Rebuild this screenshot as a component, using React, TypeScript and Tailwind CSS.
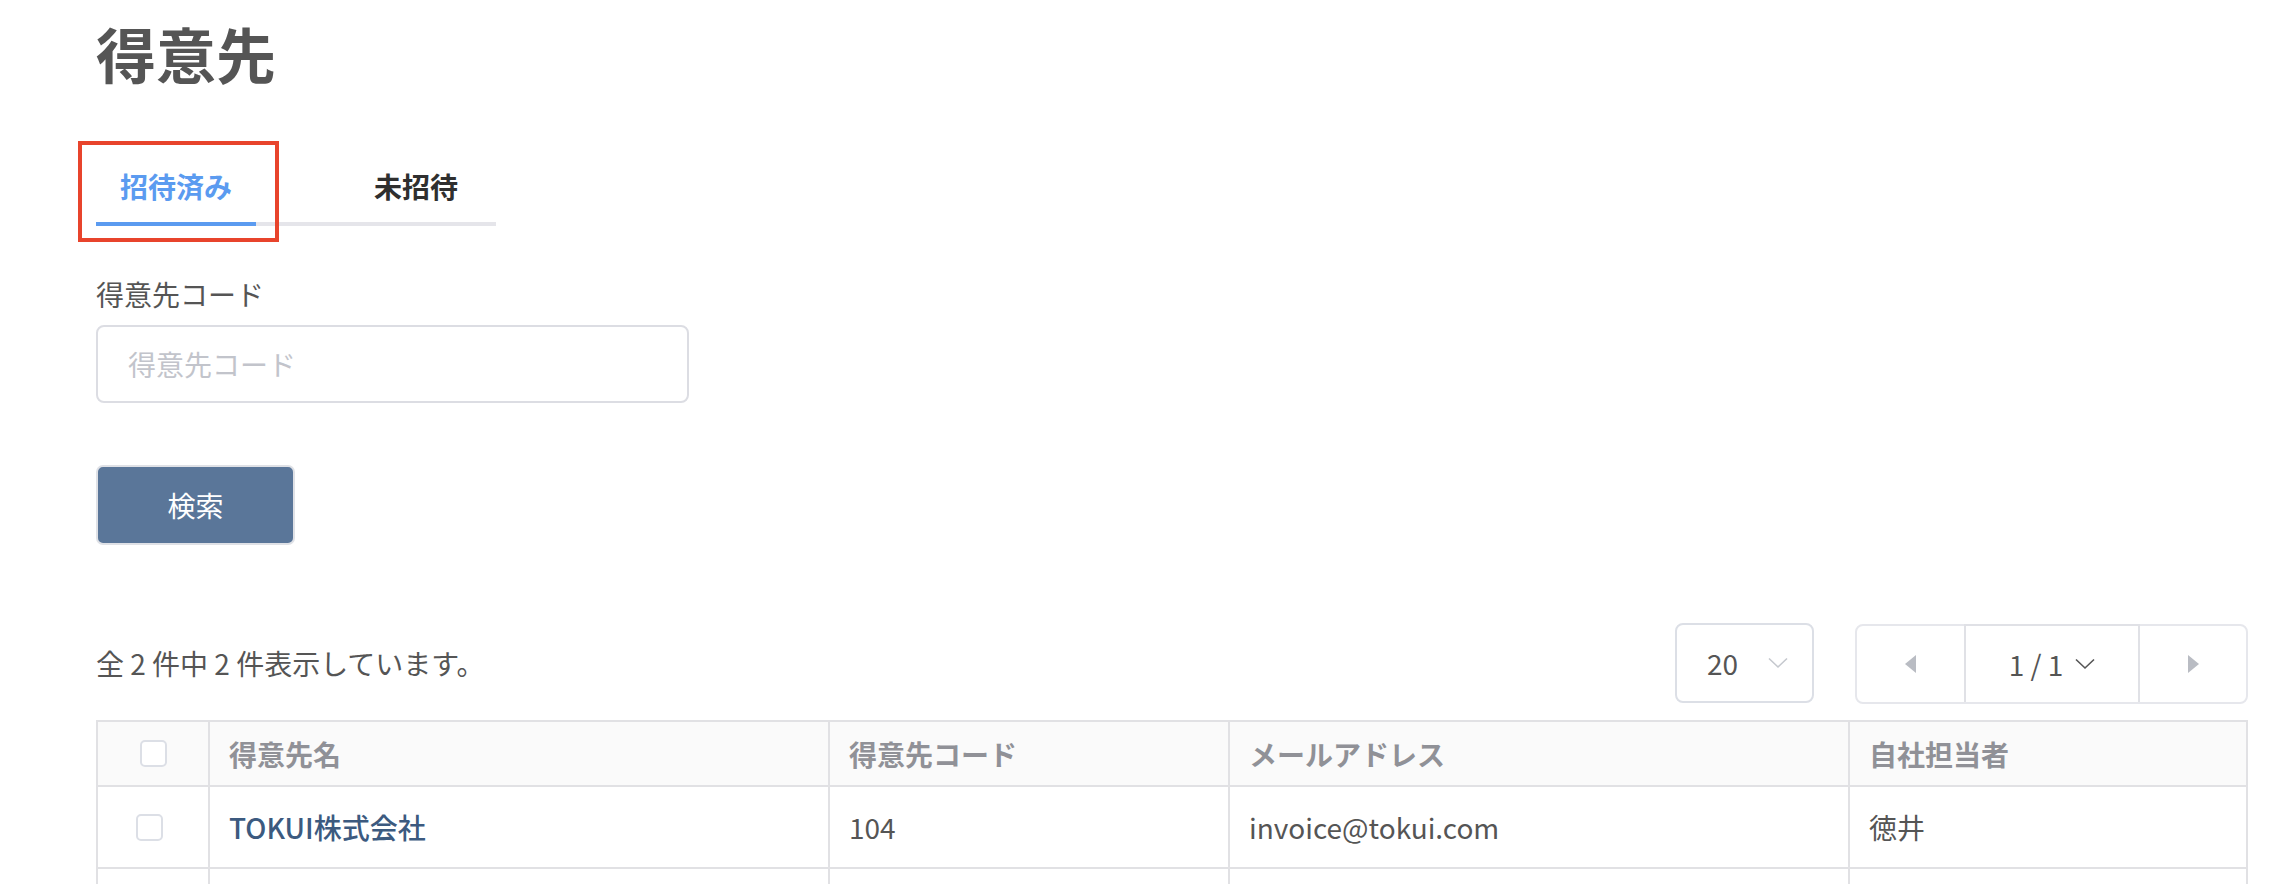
const font = { fontFamily: '"Noto Sans CJK JP", "Noto Sans", sans-serif' };

function Chevron({ className }: { className: string }) {
  return (
    <svg width="20" height="12" viewBox="0 0 20 12" className={className}>
      <polyline points="1,1.5 10,10 19,1.5" fill="none" stroke="currentColor" strokeWidth="1.6" />
    </svg>
  );
}

function Triangle({ dir }: { dir: "left" | "right" }) {
  return (
    <svg width="11" height="18" viewBox="0 0 11 18" className="text-[#b9bcc3]">
      {dir === "left" ? (
        <polygon points="11,0 11,18 0,9" fill="currentColor" />
      ) : (
        <polygon points="0,0 0,18 11,9" fill="currentColor" />
      )}
    </svg>
  );
}

const cell = "border-r-2 border-b-2 border-[#e1e1e4] flex items-center";

export default function App() {
  const rows = [{ name: "TOKUI株式会社", code: "104", mail: "invoice@tokui.com", owner: "徳井" }];

  return (
    <div className="min-h-screen bg-white pl-[96px] pr-[28px] pt-[23px] text-[28px]" style={font}>
      <h1 className="text-[60px] font-bold leading-none text-[#555555]">得意先</h1>

      {/* tabs */}
      <div className="mt-[83px] flex w-[400px] justify-between border-b-4 border-[#e5e5ea]">
        <div className="relative -mb-[4px] w-[160px] border-b-4 border-[#5b9bf0] pb-[16px] text-center font-bold leading-[40px] text-[#5b9bf0]">
          招待済み
          <div className="absolute -left-[18px] -right-[23px] -top-[25px] -bottom-[20px] border-4 border-[#e8442c]" />
        </div>
        <div className="w-[160px] pb-[16px] text-center font-bold leading-[40px] text-[#2f2f2f]">未招待</div>
      </div>

      {/* search form */}
      <div className="mt-[48px] leading-[40px] text-[#555555]">得意先コード</div>
      <input
        placeholder="得意先コード"
        className="mt-[11px] block h-[78px] w-[593px] rounded-[8px] border-2 border-[#dcdde3] px-[30px] text-[28px] text-[#555555] outline-none placeholder:text-[#c2c4cb]"
        style={font}
      />
      <button
        className="mt-[62px] flex h-[80px] w-[199px] items-center justify-center rounded-[7px] border-2 border-[#dfe1e6] bg-[#5a7699] text-[28px] text-white"
        style={font}
      >
        検索
      </button>

      {/* result toolbar */}
      <div className="mt-[77px] flex items-center justify-between">
        <div className="leading-[40px] text-[#555555]">全 2 件中 2 件表示しています。</div>
        <div className="flex items-center gap-[41px]">
          <div className="flex h-[80px] w-[139px] items-center justify-between rounded-[8px] border-2 border-[#dcdfe6] pl-[30px] pr-[24px]">
            <span className="text-[#555555]">20</span>
            <Chevron className="text-[#c5c8ce]" />
          </div>
          <div className="mt-[2px] flex h-[80px] w-[393px] items-stretch rounded-[8px] border-2 border-[#e6e7ec]">
            <div className="flex w-[107px] items-center justify-center">
              <Triangle dir="left" />
            </div>
            <div className="-mt-[2px] flex w-[176px] items-center justify-center gap-[12px] border-x-2 border-t-2 border-[#e0e1e6] text-[#555555]">
              <span>1 / 1</span>
              <Chevron className="text-[#555555]" />
            </div>
            <div className="flex flex-1 items-center justify-center">
              <Triangle dir="right" />
            </div>
          </div>
        </div>
      </div>

      {/* table */}
      <div className="mt-[16px] grid grid-cols-[112px_620px_400px_620px_398px] border-l-2 border-t-2 border-[#e1e1e4]">
        <div className={`${cell} h-[65px] justify-center bg-[#fafafa]`}>
          <span className="h-[27px] w-[27px] rounded-[5px] border-2 border-[#dcdfe6] bg-white" />
        </div>
        {["得意先名", "得意先コード", "メールアドレス", "自社担当者"].map((h) => (
          <div key={h} className={`${cell} h-[65px] bg-[#fafafa] pl-[19px] font-bold text-[#909197]`}>
            {h}
          </div>
        ))}
        {rows.map((r) => (
          <div key={r.code} className="contents">
            <div className={`${cell} h-[82px] justify-center`}>
              <span className="mr-[8px] h-[27px] w-[27px] rounded-[5px] border-2 border-[#dcdfe6] bg-white" />
            </div>
            <div className={`${cell} h-[82px] pl-[19px] font-medium text-[#3c5a7f]`}>{r.name}</div>
            <div className={`${cell} h-[82px] pl-[19px] text-[#555555]`}>{r.code}</div>
            <div className={`${cell} h-[82px] pl-[19px] text-[#555555]`}>{r.mail}</div>
            <div className={`${cell} h-[82px] pl-[19px] text-[#555555]`}>{r.owner}</div>
          </div>
        ))}
        {/* next row, below the fold */}
        {[0, 1, 2, 3, 4].map((i) => (
          <div key={i} className={`${cell} h-[82px]`} />
        ))}
      </div>
    </div>
  );
}
